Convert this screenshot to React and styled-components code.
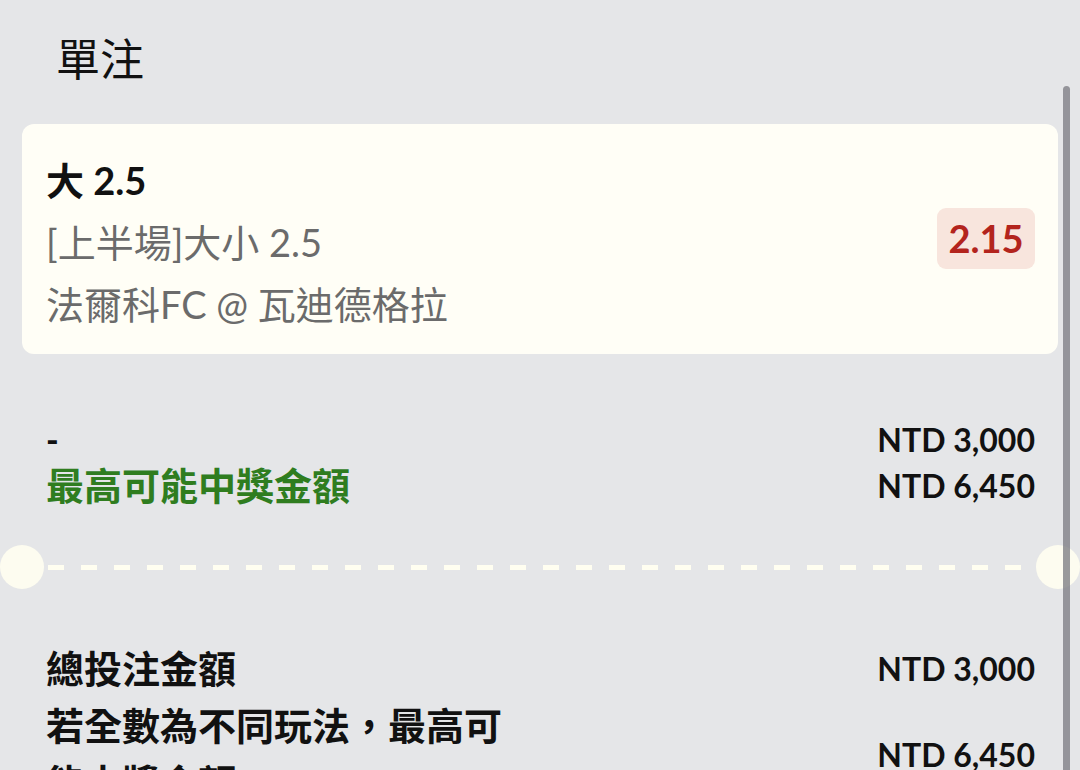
import React from "react";
import styled, { createGlobalStyle } from "styled-components";

const GlobalStyle = createGlobalStyle`
  html, body {
    margin: 0;
    padding: 0;
    background: #e5e6e8;
    overflow: hidden;
  }
  body {
    font-family: Lato, "Noto Sans CJK TC", "Noto Sans", sans-serif;
    color: #111;
  }
`;

const Page = styled.div`
  position: relative;
  width: 1080px;
  height: 770px;
  overflow: hidden;
`;

const Scrollbar = styled.div`
  position: absolute;
  top: 86px;
  right: 10px;
  width: 7px;
  bottom: 0;
  border-radius: 4px 4px 0 0;
  background: rgba(128, 128, 134, 0.8);
  z-index: 5;
`;

const Content = styled.div`
  padding: 0 22px;
`;

const Title = styled.h1`
  margin: 0;
  padding: 31px 0 0 34px;
  height: 92px;
  box-sizing: border-box;
  font-size: 44px;
  font-weight: 400;
  line-height: 56px;
  color: #111;
`;

const Card = styled.div`
  margin-top: 32px;
  background: #fffef6;
  border-radius: 12px;
  padding: 25px 23px 19px 24px;
  display: flex;
  align-items: center;
  justify-content: space-between;
`;

const CardText = styled.div`
  display: flex;
  flex-direction: column;
`;

const CardLine = styled.div`
  font-size: 38px;
  line-height: 62px;
  font-weight: ${(p) => (p.$strong ? 700 : 400)};
  color: ${(p) => (p.$strong ? "#111" : "#6b6b6b")};
  white-space: nowrap;
`;

const Odds = styled.div`
  margin-top: -8px;
  width: 98px;
  height: 61px;
  border-radius: 9px;
  background: #f8e5dd;
  color: #b3241d;
  font-size: 38px;
  font-weight: 700;
  display: flex;
  align-items: center;
  justify-content: center;
`;

const Summary = styled.div`
  padding: ${(p) => p.$pad};
`;

const Row = styled.div`
  display: flex;
  align-items: center;
  justify-content: space-between;
  min-height: ${(p) => p.$h}px;
`;

const Label = styled.div`
  max-width: 480px;
  font-size: ${(p) => p.$size || 38}px;
  line-height: ${(p) => p.$lh || 57}px;
  font-weight: ${(p) => p.$weight || 700};
  color: ${(p) => p.$color || "#111"};
`;

const Amount = styled.div`
  font-size: 32px;
  font-weight: 700;
  color: #111;
  white-space: nowrap;
`;

const Divider = styled.div`
  position: relative;
  height: 44px;
  margin: 0 -22px;
  display: flex;
  align-items: center;
  justify-content: space-between;
`;

const Notch = styled.div`
  width: 44px;
  height: 44px;
  border-radius: 50%;
  background: rgba(255, 254, 240, 0.92);
  flex-shrink: 0;
`;

const Dashes = styled.div`
  flex: 1;
  height: 5px;
  margin: 0 4px;
  background: repeating-linear-gradient(
    to right,
    #fffef0 0,
    #fffef0 16px,
    transparent 16px,
    transparent 33px
  );
`;

export default function App() {
  return (
    <Page>
      <GlobalStyle />
      <Scrollbar />
      <Content>
        <Title>單注</Title>
        <Card>
          <CardText>
            <CardLine $strong>大 2.5</CardLine>
            <CardLine>[上半場]大小 2.5</CardLine>
            <CardLine>法爾科FC @ 瓦迪德格拉</CardLine>
          </CardText>
          <Odds>2.15</Odds>
        </Card>

        <Summary $pad="62px 23px 37px 24px">
          <Row $h={46}>
            <Label $size={34} $weight={900} $lh={46}>-</Label>
            <Amount>NTD 3,000</Amount>
          </Row>
          <Row $h={46}>
            <Label $color="#2f7d1f" $lh={46}>最高可能中獎金額</Label>
            <Amount>NTD 6,450</Amount>
          </Row>
        </Summary>

        <Divider>
          <Notch />
          <Dashes />
          <Notch />
        </Divider>

        <Summary $pad="51px 23px 0 24px">
          <Row>
            <Label>總投注金額</Label>
            <Amount>NTD 3,000</Amount>
          </Row>
          <Row>
            <Label>若全數為不同玩法，最高可能中獎金額</Label>
            <Amount>NTD 6,450</Amount>
          </Row>
        </Summary>
      </Content>
    </Page>
  );
}
